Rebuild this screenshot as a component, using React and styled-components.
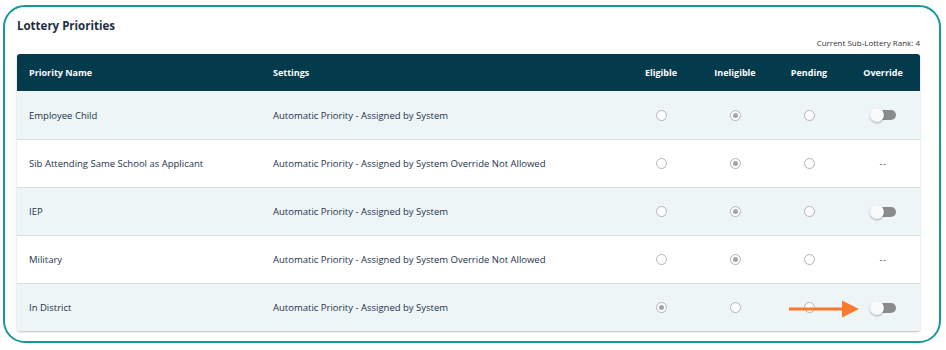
import styled, { createGlobalStyle } from "styled-components";

const GlobalStyle = createGlobalStyle`
  * { box-sizing: border-box; }
  body {
    margin: 0;
    background: #fff;
    font-family: "Open Sans", "DejaVu Sans", sans-serif;
  }
`;

const rows = [
  { name: "Employee Child", settings: "Automatic Priority - Assigned by System", picked: 1, override: true },
  { name: "Sib Attending Same School as Applicant", settings: "Automatic Priority - Assigned by System Override Not Allowed", picked: 1, override: false },
  { name: "IEP", settings: "Automatic Priority - Assigned by System", picked: 1, override: true },
  { name: "Military", settings: "Automatic Priority - Assigned by System Override Not Allowed", picked: 1, override: false },
  { name: "In District", settings: "Automatic Priority - Assigned by System", picked: 0, override: true, arrow: true },
];

const Page = styled.div`
  padding: 5px 5px 7px 3px;
`;

const Card = styled.div`
  border: 2px solid #17969c;
  border-radius: 22px;
  height: 338px;
  padding: 10px 19px 0 12px;
`;

const TitleBar = styled.div`
  display: flex;
  justify-content: space-between;
  align-items: flex-start;
  height: 37px;
`;

const Title = styled.h2`
  margin: 0;
  font-size: 11.5px;
  font-weight: 700;
  color: #1c2e3f;
  line-height: 18px;
`;

const Rank = styled.span`
  font-size: 8px;
  color: #333;
  margin-top: 20px;
`;

const Table = styled.div`
  border-radius: 3px;
  box-shadow: 0 1px 2px rgba(0, 0, 0, 0.25);
  overflow: hidden;
`;

const cols = "244px 1fr 74px 74px 74px 74px";

const HeadRow = styled.div`
  display: grid;
  grid-template-columns: ${cols};
  height: 37px;
  align-items: center;
  background: #033a4c;
  color: #fff;
  font-size: 9px;
  font-weight: 700;
`;

const HeadCell = styled.div`
  padding-left: ${(p) => (p.$center ? 0 : 12)}px;
  text-align: ${(p) => (p.$center ? "center" : "left")};
`;

const Row = styled.div`
  position: relative;
  display: grid;
  grid-template-columns: ${cols};
  height: 48px;
  align-items: center;
  background: ${(p) => (p.$alt ? "#edf5f7" : "#fff")};
  border-top: ${(p) => (p.$first ? "none" : "1px solid #dcdfe0")};
  font-size: 9.5px;
  color: #22344a;
`;

const Cell = styled.div`
  padding-left: ${(p) => (p.$center ? 0 : 12)}px;
  display: flex;
  justify-content: ${(p) => (p.$center ? "center" : "flex-start")};
  align-items: center;
`;

const Radio = styled.span`
  width: 11px;
  height: 11px;
  border-radius: 50%;
  border: 1px solid #b3b3b3;
  background: #fff;
  display: flex;
  align-items: center;
  justify-content: center;
  &::after {
    content: "";
    width: 5px;
    height: 5px;
    border-radius: 50%;
    background: ${(p) => (p.$on ? "#a5a5a5" : "transparent")};
  }
`;

const Toggle = styled.span`
  position: relative;
  width: 26px;
  height: 14px;
  display: inline-block;
  &::before {
    content: "";
    position: absolute;
    left: 5px;
    right: 0;
    top: 2px;
    height: 10px;
    border-radius: 5px;
    background: #8a8c8c;
  }
  &::after {
    content: "";
    position: absolute;
    left: 0;
    top: 0;
    width: 14px;
    height: 14px;
    border-radius: 50%;
    background: #fafafa;
    box-shadow: 0 1px 2px rgba(0, 0, 0, 0.3);
  }
`;

const Dash = styled.span`
  font-size: 9px;
  color: #555;
  letter-spacing: 0.5px;
`;

const Arrow = styled.svg`
  position: absolute;
  left: 772px;
  top: 15px;
`;

export default function App() {
  return (
    <>
      <GlobalStyle />
      <Page>
        <Card>
          <TitleBar>
            <Title>Lottery Priorities</Title>
            <Rank>Current Sub-Lottery Rank: 4</Rank>
          </TitleBar>
          <Table>
            <HeadRow>
              <HeadCell>Priority Name</HeadCell>
              <HeadCell>Settings</HeadCell>
              <HeadCell $center>Eligible</HeadCell>
              <HeadCell $center>Ineligible</HeadCell>
              <HeadCell $center>Pending</HeadCell>
              <HeadCell $center>Override</HeadCell>
            </HeadRow>
            {rows.map((r, i) => (
              <Row key={r.name} $alt={i % 2 === 0} $first={i === 0}>
                <Cell>{r.name}</Cell>
                <Cell>{r.settings}</Cell>
                {[0, 1, 2].map((k) => (
                  <Cell $center key={k}>
                    <Radio $on={r.picked === k} />
                  </Cell>
                ))}
                <Cell $center>{r.override ? <Toggle /> : <Dash>--</Dash>}</Cell>
                {r.arrow && (
                  <Arrow width="72" height="20" viewBox="0 0 72 20">
                    <line x1="0" y1="10" x2="56" y2="10" stroke="#f77b2e" strokeWidth="3" />
                    <polygon points="53,1.5 70,10 53,18.5" fill="#f77b2e" />
                  </Arrow>
                )}
              </Row>
            ))}
          </Table>
        </Card>
      </Page>
    </>
  );
}
